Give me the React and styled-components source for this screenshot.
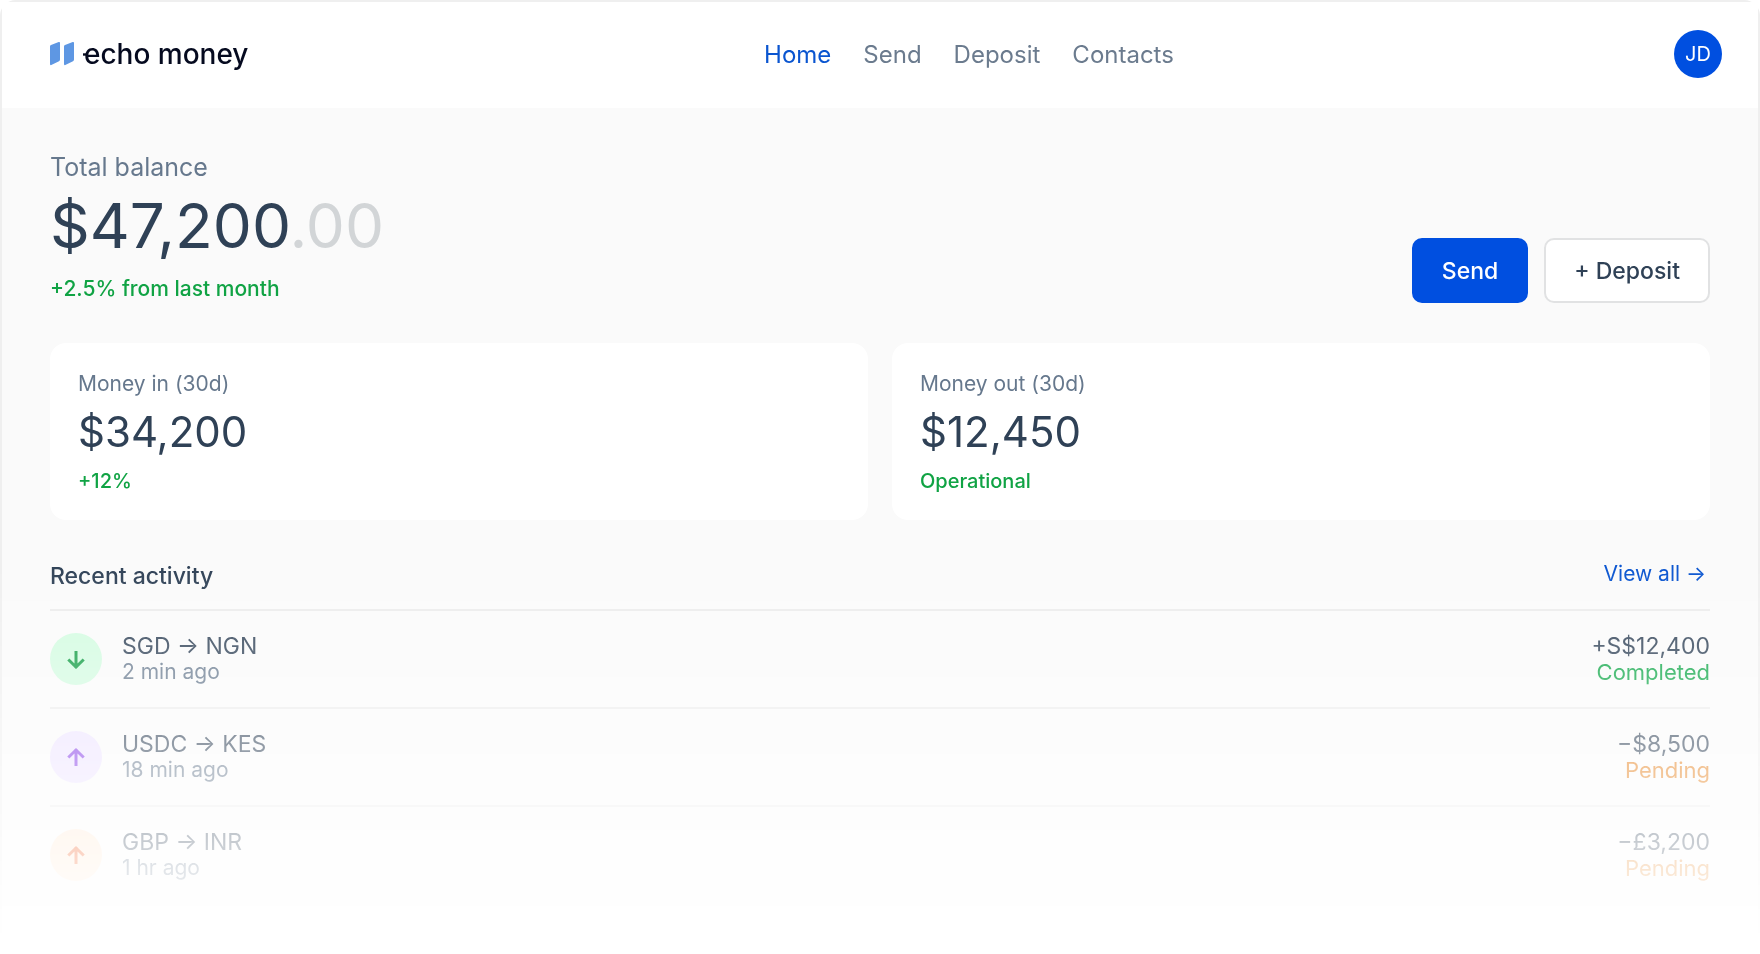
import React from "react";
import styled, { createGlobalStyle } from "styled-components";

const GlobalStyle = createGlobalStyle`
  *, *::before, *::after { box-sizing: border-box; }
  body {
    margin: 0;
    background: #ffffff;
    color: #2f4156;
    font-family: Inter, "Liberation Sans", sans-serif;
    -webkit-font-smoothing: antialiased;
  }
  h1, h2, p, ul { margin: 0; padding: 0; font-weight: 400; }
  ul { list-style: none; }
  a { color: inherit; text-decoration: none; }
`;

const Frame = styled.div`
  min-height: 100vh;
  border: 2px solid #efefef;
  border-bottom: 0;
  background: #fafafa;
  clip-path: inset(0 round 16px 16px 0 0);
  mask-image: linear-gradient(to bottom, #000 59%, transparent 99%);
`;

const Header = styled.header`
  display: flex;
  align-items: center;
  justify-content: space-between;
  height: 106px;
  padding: 0 36px 2px 48px;
  background: #ffffff;
`;

const Logo = styled.a`
  display: flex;
  align-items: center;
  width: 214px;
  color: #050a1f;
  font-size: 28px;
  line-height: 32px;
  font-weight: 500;
  white-space: nowrap;

  svg { flex: none; margin-right: -4px; }
`;

const Nav = styled.nav`
  display: flex;
  gap: 32px;
  padding-top: 2px;
`;

const NavLink = styled.a`
  && { color: ${(p) => (p.$active ? "#0a55d0" : "#6b7b8e")}; }
  font-size: 24px;
  line-height: 32px;
`;

const Avatar = styled.button`
  width: 48px;
  height: 48px;
  padding: 0;
  border: 0;
  border-radius: 50%;
  background: #004fe0;
  color: #ffffff;
  font: 400 20px/24px Inter, "Liberation Sans", sans-serif;
`;

const Main = styled.main`
  padding: 40px 48px;
`;

const Summary = styled.section`
  display: flex;
  align-items: flex-end;
  justify-content: space-between;
  margin-bottom: 40px;
`;

const SummaryLabel = styled.p`
  color: #66788d;
  font-size: 25px;
  line-height: 38px;
`;

const Balance = styled.h1`
  margin-bottom: 9px;
  font-size: 62px;
  line-height: 80px;

  span { color: #d2d5d7; }
`;

const Change = styled.p`
  color: #10a344;
  font-size: ${(p) => (p.$small ? 20 : 21)}px;
  line-height: 28px;
  font-weight: 500;
`;

const Actions = styled.div`
  display: flex;
  gap: 16px;
`;

const ActionButton = styled.button`
  height: 65px;
  padding: 0 28px;
  border: 2px solid ${(p) => (p.$primary ? "#004fe0" : "#e1e2e3")};
  border-radius: 10px;
  background: ${(p) => (p.$primary ? "#004fe0" : "#ffffff")};
  color: ${(p) => (p.$primary ? "#ffffff" : "#2f4156")};
  font: 500 23px/32px Inter, "Liberation Sans", sans-serif;
`;

const Cards = styled.section`
  display: grid;
  grid-template-columns: 1fr 1fr;
  gap: 24px;
  margin-bottom: 40px;
`;

const Card = styled.article`
  padding: 27px 28px 25px;
  border-radius: 16px;
  background: #ffffff;
`;

const CardLabel = styled.h2`
  color: #66788d;
  font-size: 21px;
  line-height: 28px;
`;

const CardValue = styled.p`
  padding: 2px 0 3px;
  font-size: 42px;
  line-height: 64px;
`;

const ActivityHead = styled.div`
  display: flex;
  justify-content: space-between;
  height: 51px;
  border-bottom: 2px solid #ececec;
`;

const ActivityTitle = styled.h2`
  font-size: 23px;
  line-height: 32px;
  && { font-weight: 500; }
`;

const ViewAll = styled.a`
  && { color: #0a55d0; }
  padding-right: 4px;
  font-size: 21px;
  line-height: 28px;
`;

const Row = styled.li`
  display: flex;
  align-items: center;
  gap: 20px;
  padding: 22px 0;

  & + & { border-top: 2px solid #ececec; }
`;

const Badge = styled.span`
  display: flex;
  align-items: center;
  justify-content: center;
  width: 52px;
  height: 52px;
  border-radius: 50%;
  background: ${(p) => p.$bg};
  color: ${(p) => p.$fg};
`;

const Pair = styled.div`
  flex: ${(p) => (p.$end ? "none" : 1)};
  text-align: ${(p) => (p.$end ? "right" : "left")};
`;

const RowTitle = styled.p`
  font-size: 23px;
  line-height: 26px;
`;

const RowNote = styled.p`
  color: ${(p) => p.$color || "#66788d"};
  font-size: ${(p) => (p.$color ? 22 : 21)}px;
  line-height: 26px;
`;

const tones = {
  green: { bg: "#d2fbe0", fg: "#0a9a3e" },
  purple: { bg: "#ede3ff", fg: "#8236e6" },
  orange: { bg: "#ffe8d2", fg: "#f05010" },
};

const statusColor = { Completed: "#0aa544", Pending: "#e5801c" };

const activity = [
  { from: "SGD", to: "NGN", time: "2 min ago", amount: "+S$12,400", status: "Completed", tone: "green", down: true },
  { from: "USDC", to: "KES", time: "18 min ago", amount: "−$8,500", status: "Pending", tone: "purple" },
  { from: "GBP", to: "INR", time: "1 hr ago", amount: "−£3,200", status: "Pending", tone: "orange" },
];

function LogoMark() {
  return (
    <svg width="38" height="26" viewBox="0 0 38 26" aria-hidden="true">
      <path
        d="M0 5.6Q0 4.5 1 4.1L8.700 1.100Q10 .6 10 2V18.600Q10 19.700 9 20.200L1.300 24Q0 24.600 0 23ZM14 5.600Q14 4.500 15 4.100L22.700 1.100Q24 .6 24 2V18.600Q24 19.700 23 20.200L15.300 24Q14 24.600 14 23Z"
        fill="#5e97e3"
      />
      <path d="M33 13.500H38" stroke="#050a1f" strokeWidth="2.400" />
    </svg>
  );
}

function DirectionIcon({ down }) {
  return (
    <svg width="18" height="20" viewBox="0 0 18 20" fill="none" stroke="currentColor" strokeWidth="3" aria-hidden="true">
      <path d={down ? "M9 2V19M1.300 10.500L9 18L16.700 10.500" : "M9 19V2M1.300 10.500L9 3L16.700 10.500"} />
    </svg>
  );
}

export default function App() {
  return (
    <>
      <GlobalStyle />
      <Frame>
        <Header>
          <Logo href="#home">
            <LogoMark />
            echo money
          </Logo>
          <Nav>
            <NavLink href="#home" $active aria-current="page">Home</NavLink>
            <NavLink href="#send">Send</NavLink>
            <NavLink href="#deposit">Deposit</NavLink>
            <NavLink href="#contacts">Contacts</NavLink>
          </Nav>
          <Avatar type="button">JD</Avatar>
        </Header>
        <Main>
          <Summary>
            <div>
              <SummaryLabel>Total balance</SummaryLabel>
              <Balance>$47,200<span>.00</span></Balance>
              <Change>+2.5% from last month</Change>
            </div>
            <Actions>
              <ActionButton type="button" $primary>Send</ActionButton>
              <ActionButton type="button">+ Deposit</ActionButton>
            </Actions>
          </Summary>
          <Cards>
            <Card>
              <CardLabel>Money in (30d)</CardLabel>
              <CardValue>$34,200</CardValue>
              <Change $small>+12%</Change>
            </Card>
            <Card>
              <CardLabel>Money out (30d)</CardLabel>
              <CardValue>$12,450</CardValue>
              <Change $small>Operational</Change>
            </Card>
          </Cards>
          <section>
            <ActivityHead>
              <ActivityTitle>Recent activity</ActivityTitle>
              <ViewAll href="#activity">View all →</ViewAll>
            </ActivityHead>
            <ul>
              {activity.map((item) => (
                <Row key={item.from}>
                  <Badge $bg={tones[item.tone].bg} $fg={tones[item.tone].fg}>
                    <DirectionIcon down={item.down} />
                  </Badge>
                  <Pair>
                    <RowTitle>{item.from} → {item.to}</RowTitle>
                    <RowNote>{item.time}</RowNote>
                  </Pair>
                  <Pair $end>
                    <RowTitle>{item.amount}</RowTitle>
                    <RowNote $color={statusColor[item.status]}>{item.status}</RowNote>
                  </Pair>
                </Row>
              ))}
            </ul>
          </section>
        </Main>
      </Frame>
    </>
  );
}
